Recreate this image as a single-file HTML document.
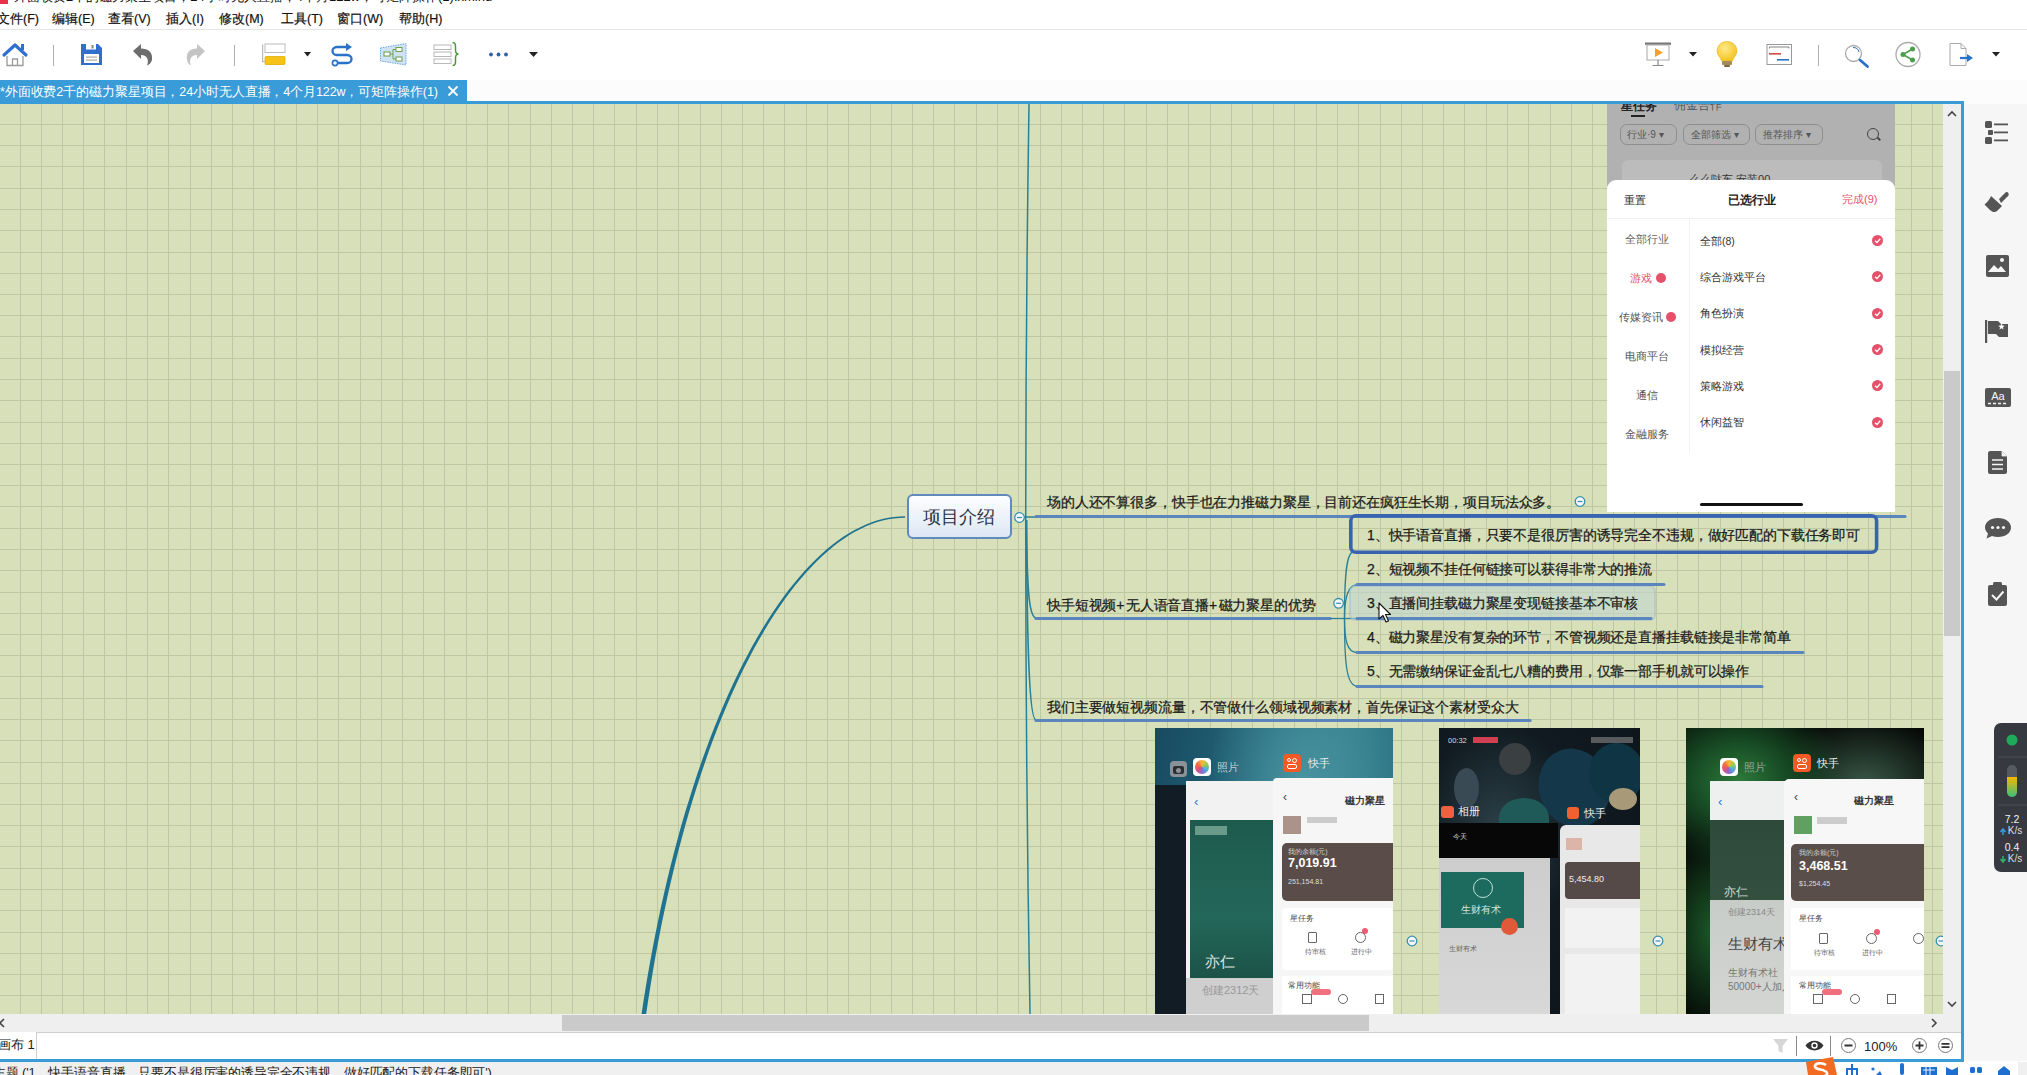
<!DOCTYPE html>
<html><head><meta charset="utf-8">
<style>
*{margin:0;padding:0;box-sizing:border-box}
html,body{width:2027px;height:1075px;overflow:hidden;background:#fff;font-family:"Liberation Sans",sans-serif;color:#222}
.a{position:absolute}
.nw{white-space:nowrap}
.menu span{position:absolute;top:12px;font-size:12.5px;line-height:15px;color:#111;white-space:nowrap;-webkit-text-stroke:0.2px #111}
.tp{position:absolute;font-size:14px;letter-spacing:-0.13px;line-height:17px;color:#1a1a1a;white-space:nowrap;-webkit-text-stroke:0.25px #1a1a1a}
.ph{position:absolute;overflow:hidden}
.ph *{position:absolute;white-space:nowrap}
.tp b{font-weight:normal;letter-spacing:1.3px}
</style></head><body>
<!-- title strip -->
<div class="a" style="left:0;top:0;width:8px;height:4px;background:#e8334a"></div>
<div class="a nw" style="left:14px;top:-10px;font-size:13px;line-height:14px;color:#111">外面收费2千的磁力聚星项目，24小时无人直播，4个月122w，可矩阵操作(1).xmind</div>
<!-- menu -->
<div class="menu">
<span style="left:-3px">文件(F)</span><span style="left:52px">编辑(E)</span><span style="left:108px">查看(V)</span><span style="left:166px">插入(I)</span><span style="left:219px">修改(M)</span><span style="left:281px">工具(T)</span><span style="left:337px">窗口(W)</span><span style="left:399px">帮助(H)</span>
</div>
<div class="a" style="left:0;top:29px;width:2027px;height:1px;background:#e6e6e6"></div>
<!-- toolbar -->
<svg class="a" style="left:0;top:30px" width="2027" height="50" viewBox="0 30 2027 50">
 <!-- home -->
 <path d="M4 55 L15 45 L26 55" stroke="#2f6fd0" stroke-width="3.2" fill="none" stroke-linejoin="round" stroke-linecap="round"/>
 <rect x="21" y="44" width="3" height="6" fill="#2f6fd0"/>
 <path d="M7 56 V65.5 H23 V56" stroke="#9a9a9a" stroke-width="1.3" fill="none"/>
 <path d="M12.5 65.5 V59 H17.5 V65.5" stroke="#9a9a9a" stroke-width="1.3" fill="none"/>
 <rect x="53" y="45" width="1" height="21" fill="#b0b0b0"/>
 <!-- save -->
 <path d="M81 44 H98 L102 48 V65 H81 Z" fill="#2f6fd0"/>
 <rect x="84" y="54" width="15" height="9" fill="#fff"/>
 <rect x="86" y="56.5" width="11" height="1.2" fill="#aaa"/>
 <rect x="86" y="59.5" width="11" height="1.2" fill="#aaa"/>
 <rect x="86" y="44" width="10" height="5.5" fill="#fff"/>
 <rect x="91.5" y="45" width="2" height="3.5" fill="#888"/>
 <!-- undo -->
 <path d="M133 51 L141 44 V48.5 C148 48.5 153 52 152 60 C151 63 149 65 147 65.5 C149 61 148 55 141 55 V59 Z" fill="#6d6d6d"/>
 <!-- redo -->
 <path d="M205 51 L197 44 V48.5 C190 48.5 186 52 187 60 C188 63 189 65 191 65.5 C189 61 190 55 197 55 V59 Z" fill="#c4c4c4"/>
 <rect x="234" y="45" width="1" height="21" fill="#b0b0b0"/>
 <!-- topic -->
 <rect x="262" y="44.5" width="1.2" height="18" fill="#bbb"/>
 <rect x="265" y="44" width="20" height="8.5" fill="#fff" stroke="#bbb" stroke-width="1"/>
 <rect x="265" y="56.5" width="20" height="8" rx="1" fill="#f7c21a" stroke="#e6ad00" stroke-width="0.8"/>
 <rect x="262" y="61" width="3" height="1" fill="#bbb"/>
 <path d="M304 52 H311 L307.5 56.5 Z" fill="#222"/>
 <!-- relationship -->
 <path d="M349 47 H337 C331 47 331 55 337 55 H347 C353 55 353 63 347 63 H338" stroke="#2a72c8" stroke-width="2.3" fill="none"/>
 <path d="M346 43 L352 47 L346 51 Z" fill="#2a72c8"/>
 <circle cx="335" cy="63" r="2.6" fill="#fff" stroke="#2a72c8" stroke-width="1.6"/>
 <!-- boundary/structure -->
 <path d="M380.5 48 L406 43.5 V65 L380.5 61 Z" fill="#cfe3f5" stroke="#6aa8da" stroke-width="1" stroke-dasharray="1.5 1"/>
 <rect x="384" y="52" width="6" height="4" fill="#fff" stroke="#6aa04a" stroke-width="1"/>
 <rect x="396" y="47.5" width="6" height="4" fill="#fff" stroke="#6aa04a" stroke-width="1"/>
 <rect x="396" y="57" width="6" height="4" fill="#fff" stroke="#6aa04a" stroke-width="1"/>
 <path d="M390 54 H393 M393 49.5 V59 M393 49.5 H396 M393 59 H396" stroke="#6aa04a" stroke-width="1" fill="none"/>
 <!-- summary -->
 <rect x="434" y="45" width="17" height="4.5" fill="#fff" stroke="#b8b8b8" stroke-width="1"/>
 <rect x="434" y="52" width="17" height="4.5" fill="#fff" stroke="#b8b8b8" stroke-width="1"/>
 <rect x="434" y="59" width="17" height="4.5" fill="#fff" stroke="#b8b8b8" stroke-width="1"/>
 <path d="M452.5 42.5 C456 42.5 455.5 45 455.5 50 C455.5 53 456.5 54 458.5 54 C456.5 54 455.5 55 455.5 58 C455.5 63 456 65.5 452.5 65.5" stroke="#4a9a3a" stroke-width="1.5" fill="none"/>
 <!-- more -->
 <circle cx="491" cy="54.5" r="1.9" fill="#2f5fa8"/><circle cx="498.5" cy="54.5" r="1.9" fill="#2f5fa8"/><circle cx="506" cy="54.5" r="1.9" fill="#2f5fa8"/>
 <path d="M529 52 H538 L533.5 57 Z" fill="#222"/>
 <!-- right side: presentation -->
 <rect x="1645" y="42.5" width="26" height="2.3" fill="#777"/>
 <rect x="1647" y="45" width="22" height="15" fill="#fff" stroke="#aaa" stroke-width="1"/>
 <path d="M1655 48 L1663 52.5 L1655 57 Z" fill="#f3a02a"/>
 <path d="M1658 60 V65.5 M1652.5 65.5 H1663.5" stroke="#888" stroke-width="1.2"/>
 <path d="M1689 52 H1697 L1693 56.5 Z" fill="#222"/>
 <!-- bulb -->
 <defs><radialGradient id="bg1" cx="0.4" cy="0.35" r="0.7"><stop offset="0" stop-color="#ffe98a"/><stop offset="1" stop-color="#f2c21c"/></radialGradient></defs>
 <path d="M1727 41.5 C1733 41.5 1737 46 1737 51 C1737 55 1733.5 57 1732.5 61 H1721.5 C1720.5 57 1717 55 1717 51 C1717 46 1721 41.5 1727 41.5 Z" fill="url(#bg1)" stroke="#e8b515" stroke-width="0.6"/>
 <rect x="1722" y="61" width="10" height="4" rx="1" fill="#a58a5a"/>
 <rect x="1724" y="65" width="6" height="2" rx="1" fill="#7a6540"/>
 <!-- gantt -->
 <rect x="1767" y="44.5" width="24.5" height="20" fill="#fff" stroke="#999" stroke-width="1"/>
 <path d="M1769.5 48.5 V47 H1789 V48.5" stroke="#666" stroke-width="0.8" fill="none"/>
 <rect x="1769" y="53" width="12" height="1.6" fill="#d44a4a"/>
 <rect x="1777" y="59" width="12" height="1.6" fill="#2a72c8"/>
 <rect x="1818" y="45" width="1" height="21" fill="#b0b0b0"/>
 <!-- search -->
 <circle cx="1853.5" cy="53.5" r="8" fill="#fff" stroke="#aaa" stroke-width="1.3"/>
 <path d="M1853 47.5 A6 6 0 0 1 1859 52" stroke="#2a72c8" stroke-width="1" fill="none"/>
 <path d="M1860 60 L1867.5 66.5" stroke="#2a72c8" stroke-width="2.8" stroke-linecap="round"/>
 <!-- share -->
 <circle cx="1908" cy="54.5" r="12" fill="#fff" stroke="#aaa" stroke-width="1.3"/>
 <circle cx="1912.5" cy="49" r="2.5" fill="#4aa04a"/><circle cx="1903" cy="54.5" r="2.5" fill="#4aa04a"/><circle cx="1912.5" cy="60" r="2.5" fill="#4aa04a"/>
 <path d="M1912.5 49 L1903 54.5 L1912.5 60" stroke="#4aa04a" stroke-width="1.6" fill="none"/>
 <!-- export -->
 <path d="M1950 43.5 H1961 L1966 48.5 V65.5 H1950 Z" fill="#fff" stroke="#aaa" stroke-width="1"/>
 <path d="M1961 43.5 V48.5 H1966" stroke="#aaa" stroke-width="1" fill="none"/>
 <path d="M1960 58 H1969" stroke="#2a72c8" stroke-width="2.2"/>
 <path d="M1967 54 L1973 58 L1967 62 Z" fill="#2a72c8"/>
 <path d="M1992 52 H2000 L1996 56.5 Z" fill="#222"/>
</svg>
<div class="a" style="left:0;top:80px;width:2027px;height:24px;background:#fcfcfc"></div>
<!-- tab bar -->
<div class="a" style="left:0;top:80px;width:467px;height:24px;background:#3a9bd9"></div>
<div class="a nw" style="left:0;top:84px;font-size:12.5px;letter-spacing:-0.1px;line-height:16px;color:#fff">*外面收费2千的磁力聚星项目，24小时无人直播，4个月122w，可矩阵操作(1)</div>
<svg class="a" style="left:447px;top:85px" width="12" height="12"><path d="M1.5 1.5 L10.5 10.5 M10.5 1.5 L1.5 10.5" stroke="#fff" stroke-width="1.8"/></svg>
<div class="a" style="left:0;top:101px;width:1964px;height:3px;background:#3a9bd9"></div>
<!-- canvas -->
<div class="a" style="left:0;top:104px;width:1943px;height:910px;overflow:hidden;background:#d7e0b9">
 <div class="a" id="cv" style="left:0;top:-104px;width:1943px;height:1014px">
  <svg class="a" style="left:0;top:0" width="1943" height="1014">
   <path d="M20.5 104V1014M41.5 104V1014M62.5 104V1014M83.5 104V1014M104.5 104V1014M126.5 104V1014M147.5 104V1014M168.5 104V1014M190.5 104V1014M211.5 104V1014M232.5 104V1014M253.5 104V1014M274.5 104V1014M296.5 104V1014M317.5 104V1014M338.5 104V1014M360.5 104V1014M381.5 104V1014M402.5 104V1014M423.5 104V1014M444.5 104V1014M466.5 104V1014M487.5 104V1014M508.5 104V1014M530.5 104V1014M551.5 104V1014M572.5 104V1014M593.5 104V1014M614.5 104V1014M636.5 104V1014M657.5 104V1014M678.5 104V1014M700.5 104V1014M721.5 104V1014M742.5 104V1014M763.5 104V1014M784.5 104V1014M806.5 104V1014M827.5 104V1014M848.5 104V1014M870.5 104V1014M891.5 104V1014M912.5 104V1014M933.5 104V1014M954.5 104V1014M976.5 104V1014M997.5 104V1014M1018.5 104V1014M1040.5 104V1014M1061.5 104V1014M1082.5 104V1014M1103.5 104V1014M1124.5 104V1014M1146.5 104V1014M1167.5 104V1014M1188.5 104V1014M1210.5 104V1014M1231.5 104V1014M1252.5 104V1014M1273.5 104V1014M1294.5 104V1014M1316.5 104V1014M1337.5 104V1014M1358.5 104V1014M1380.5 104V1014M1401.5 104V1014M1422.5 104V1014M1443.5 104V1014M1464.5 104V1014M1486.5 104V1014M1507.5 104V1014M1528.5 104V1014M1550.5 104V1014M1571.5 104V1014M1592.5 104V1014M1613.5 104V1014M1634.5 104V1014M1656.5 104V1014M1677.5 104V1014M1698.5 104V1014M1720.5 104V1014M1741.5 104V1014M1762.5 104V1014M1783.5 104V1014M1804.5 104V1014M1826.5 104V1014M1847.5 104V1014M1868.5 104V1014M1890.5 104V1014M1911.5 104V1014M1932.5 104V1014M0 124.5H1943M0 145.5H1943M0 166.5H1943M0 188.5H1943M0 209.5H1943M0 230.5H1943M0 252.5H1943M0 273.5H1943M0 294.5H1943M0 315.5H1943M0 336.5H1943M0 358.5H1943M0 379.5H1943M0 400.5H1943M0 422.5H1943M0 443.5H1943M0 464.5H1943M0 485.5H1943M0 506.5H1943M0 528.5H1943M0 549.5H1943M0 570.5H1943M0 592.5H1943M0 613.5H1943M0 634.5H1943M0 655.5H1943M0 676.5H1943M0 698.5H1943M0 719.5H1943M0 740.5H1943M0 762.5H1943M0 783.5H1943M0 804.5H1943M0 825.5H1943M0 846.5H1943M0 868.5H1943M0 889.5H1943M0 910.5H1943M0 932.5H1943M0 953.5H1943M0 974.5H1943M0 995.5H1943" stroke="#bdc8a2" stroke-width="1" fill="none"/>
   <!-- main big curve (tapered) -->
   <path d="M905.0 516.3 L899.3 516.5 L893.7 517.0 L888.0 517.8 L882.4 519.1 L876.7 520.6 L871.0 522.5 L865.4 524.8 L859.7 527.4 L854.1 530.3 L848.5 533.5 L842.9 537.1 L837.3 541.0 L831.7 545.3 L826.2 549.8 L820.7 554.7 L815.2 559.9 L809.7 565.4 L804.3 571.3 L798.9 577.4 L793.5 583.9 L788.2 590.6 L782.9 597.7 L777.7 605.1 L772.5 612.7 L767.3 620.7 L762.2 628.9 L757.2 637.5 L752.2 646.3 L747.3 655.4 L742.4 664.8 L737.6 674.5 L732.8 684.4 L728.1 694.7 L723.5 705.2 L719.0 716.0 L714.5 727.0 L710.1 738.3 L705.8 749.9 L701.5 761.8 L697.3 773.9 L693.3 786.2 L689.3 798.9 L685.3 811.7 L681.5 824.8 L677.8 838.2 L674.2 851.8 L670.6 865.7 L667.2 879.8 L663.9 894.1 L660.6 908.7 L657.5 923.5 L654.5 938.5 L651.6 953.8 L648.8 969.2 L646.1 985.0 L643.5 1000.9 L641.1 1017.0 L638.8 1033.4 L636.6 1050.0 L641.2 1050.6 L643.4 1034.0 L645.6 1017.7 L648.0 1001.6 L650.5 985.7 L653.1 970.0 L655.8 954.5 L658.7 939.3 L661.6 924.3 L664.7 909.5 L667.8 895.0 L671.1 880.7 L674.5 866.6 L677.9 852.8 L681.5 839.2 L685.1 825.9 L688.9 812.8 L692.7 799.9 L696.7 787.3 L700.7 775.0 L704.8 762.9 L708.9 751.1 L713.2 739.5 L717.5 728.2 L721.9 717.2 L726.4 706.4 L730.9 695.9 L735.6 685.7 L740.2 675.8 L745.0 666.1 L749.8 656.7 L754.6 647.6 L759.6 638.8 L764.5 630.3 L769.5 622.1 L774.6 614.1 L779.7 606.5 L784.9 599.1 L790.1 592.1 L795.3 585.3 L800.6 578.9 L805.9 572.8 L811.3 566.9 L816.6 561.4 L822.0 556.2 L827.5 551.4 L832.9 546.8 L838.4 542.6 L843.9 538.7 L849.4 535.1 L854.9 531.8 L860.5 528.9 L866.0 526.3 L871.6 524.0 L877.2 522.1 L882.7 520.6 L888.3 519.3 L893.9 518.4 L899.4 517.9 L905.0 517.7Z" fill="#1f7391"/>
   <!-- long spine -->
   <path d="M1029 104 Q1022 560 1030 1014" stroke="#2a8197" stroke-width="1.5" fill="none"/>
   <!-- branches from node -->
   <path d="M1024 517 H1036" stroke="#2a8197" stroke-width="1.5" fill="none"/>
   <path d="M1026.5 520 C1027 590 1029 617 1036 618" stroke="#2a8197" stroke-width="1.6" fill="none"/>
   <path d="M1026.5 520 C1027 660 1030 720 1036 720" stroke="#2a8197" stroke-width="1.6" fill="none"/>
   <!-- underlines level 1 -->
   <path d="M1036 516.5 H1905" stroke="#5a86bd" stroke-width="3.2" fill="none" stroke-linecap="round"/>
   <path d="M1036 618.5 H1330" stroke="#5a86bd" stroke-width="3.2" fill="none" stroke-linecap="round"/>
   <path d="M1330 618.5 H1358" stroke="#2a8197" stroke-width="1.3" fill="none"/>
   <path d="M1036 720.5 H1530" stroke="#5a86bd" stroke-width="3.2" fill="none" stroke-linecap="round"/>
   <!-- sub branches -->
   <path d="M1344.5 618 C1344.5 580 1346 553 1353 552" stroke="#2a8197" stroke-width="1.3" fill="none"/>
   <path d="M1344.5 618 C1344.5 600 1347 585 1357 585" stroke="#2a8197" stroke-width="1.3" fill="none"/>
   <path d="M1344.5 618 C1344.5 640 1347 652.5 1357 652.5" stroke="#2a8197" stroke-width="1.3" fill="none"/>
   <path d="M1344.5 618 C1344.5 660 1346 686 1357 686" stroke="#2a8197" stroke-width="1.3" fill="none"/>
   <!-- hover box sub3 -->
   <rect x="1350" y="586" width="305" height="34" rx="5" fill="#c3d6cf" fill-opacity="0.6" stroke="#9fbccf" stroke-opacity="0.5" stroke-width="2"/>
   <!-- sub underlines -->
   <path d="M1357 584.5 H1664" stroke="#5a86bd" stroke-width="3" fill="none" stroke-linecap="round"/>
   <path d="M1357 618.5 H1651" stroke="#5a86bd" stroke-width="3" fill="none" stroke-linecap="round"/>
   <path d="M1357 652.5 H1803" stroke="#5a86bd" stroke-width="3" fill="none" stroke-linecap="round"/>
   <path d="M1357 686.5 H1762" stroke="#5a86bd" stroke-width="3" fill="none" stroke-linecap="round"/>
   <!-- selected sub1 box -->
   <rect x="1350.8" y="515.7" width="525.8" height="36.6" rx="5" fill="none" stroke="#3763af" stroke-width="3.6"/>
   <!-- collapse circles -->
   <g fill="#f4f8fb" stroke="#3b8fae" stroke-width="1.3">
    <circle cx="1019.5" cy="517.5" r="4.8"/>
    <circle cx="1580" cy="501.5" r="4.8"/>
    <circle cx="1338.6" cy="603.3" r="4.8"/>
    <circle cx="1412" cy="941" r="4.8"/>
    <circle cx="1658" cy="941" r="4.8"/>
    <circle cx="1941" cy="941" r="4.8"/>
   </g>
   <g stroke="#3b8fae" stroke-width="1.2">
    <path d="M1017 517.5 H1022"/><path d="M1577.5 501.5 H1582.5"/><path d="M1336.1 603.3 H1341.1"/>
    <path d="M1409.5 941 H1414.5"/><path d="M1655.5 941 H1660.5"/><path d="M1938.5 941 H1943.5"/>
   </g>
  </svg>
  <!-- central node -->
  <div class="a" style="left:907px;top:493.5px;width:104.5px;height:45px;border:2px solid #5f8abd;border-radius:6px;background:linear-gradient(#fdfeff,#dde7f4)"></div>
  <div class="a nw" style="left:922.5px;top:506px;font-size:18px;line-height:22px;color:#2b3344">项目介绍</div>
  <!-- level1 topics -->
  <div class="tp" style="left:1047px;top:494px">场的人还不算很多，快手也在力推磁力聚星，目前还在疯狂生长期，项目玩法众多。</div>
  <div class="tp" style="left:1047px;top:597px">快手短视频<b>+</b>无人语音直播<b>+</b>磁力聚星的优势</div>
  <div class="tp" style="left:1047px;top:699px">我们主要做短视频流量，不管做什么领域视频素材，首先保证这个素材受众大</div>
  <!-- subs -->
  <div class="tp" style="left:1367px;top:527px">1、快手语音直播，只要不是很厉害的诱导完全不违规，做好匹配的下载任务即可</div>
  <div class="tp" style="left:1367px;top:561px">2、短视频不挂任何链接可以获得非常大的推流</div>
  <div class="tp" style="left:1367px;top:595px">3、直播间挂载磁力聚星变现链接基本不审核</div>
  <div class="tp" style="left:1367px;top:629px">4、磁力聚星没有复杂的环节，不管视频还是直播挂载链接是非常简单</div>
  <div class="tp" style="left:1367px;top:663px">5、无需缴纳保证金乱七八糟的费用，仅靠一部手机就可以操作</div>
  <!-- cursor -->
  <svg class="a" style="left:1378px;top:602px" width="14" height="22"><path d="M1 1 V17 L5 13.5 L8 20 L10.5 19 L7.5 12.5 H12.5 Z" fill="#fff" stroke="#111" stroke-width="1.1" stroke-linejoin="round"/></svg>
 </div>
</div>
<!-- images inside canvas clip: positioned in page coords, clipped by wrapper -->
<div class="a" style="left:0;top:104px;width:1943px;height:910px;overflow:hidden">
<div class="a" style="left:0;top:-104px;width:1943px;height:1014px">

<!-- top phone screenshot (filter sheet) -->
<div class="ph" style="left:1607px;top:90px;width:288px;height:422px;background:#b1b1b1;font-size:10px;color:#444">
 <div style="left:14px;top:8px;font-size:12px;font-weight:bold;color:#222">星任务</div>
 <div style="left:67px;top:8px;font-size:11.5px;color:#555">佣金合作</div>
 <div style="left:24px;top:25px;width:14px;height:2px;background:#222"></div>
 <div style="left:13px;top:34px;width:57px;height:21px;border:1px solid #8e8e8e;border-radius:7px"></div>
 <div style="left:76px;top:34px;width:67px;height:21px;border:1px solid #8e8e8e;border-radius:7px"></div>
 <div style="left:148px;top:34px;width:68px;height:21px;border:1px solid #8e8e8e;border-radius:7px"></div>
 <div style="left:20px;top:38px;font-size:10px;color:#555">行业·9 ▾</div>
 <div style="left:84px;top:38px;font-size:10px;color:#555">全部筛选 ▾</div>
 <div style="left:156px;top:38px;font-size:10px;color:#555">推荐排序 ▾</div>
 <div style="left:260px;top:38px;width:12px;height:12px;border:1.6px solid #444;border-radius:50%"></div><div style="left:270px;top:48px;width:4px;height:1.6px;background:#444;transform:rotate(45deg)"></div>
 <div style="left:15px;top:70px;width:260px;height:40px;background:#bcbcbc;border-radius:6px"></div>
 <div style="left:82px;top:82px;font-size:11px;color:#333">么么哒车 安装00</div>
 <div style="left:0;top:90px;width:288px;height:340px;background:#fff;border-radius:9px 9px 0 0"></div>
 <div style="left:17px;top:103px;font-size:11px;color:#333">重置</div>
 <div style="left:121px;top:102px;font-size:12px;font-weight:bold;color:#222">已选行业</div>
 <div style="left:235px;top:102px;font-size:11px;color:#e5506a">完成(9)</div>
 <div style="left:0;top:128px;width:288px;height:1px;background:#f0f0f0"></div>
 <div style="left:82px;top:128px;width:1px;height:235px;background:#f2f2f2"></div>
 <div style="left:18px;top:142px;font-size:11px;color:#666">全部行业</div>
 <div style="left:23px;top:181px;font-size:11px;color:#e5506a">游戏</div>
 <div style="left:49px;top:183px;width:10px;height:10px;border-radius:50%;background:#e5506a"></div>
 <div style="left:12px;top:220px;font-size:11px;color:#555">传媒资讯</div>
 <div style="left:59px;top:222px;width:10px;height:10px;border-radius:50%;background:#e5506a"></div>
 <div style="left:18px;top:259px;font-size:11px;color:#555">电商平台</div>
 <div style="left:29px;top:298px;font-size:11px;color:#555">通信</div>
 <div style="left:18px;top:337px;font-size:11px;color:#555">金融服务</div>
 <div style="left:93px;top:145px;font-size:10.5px;color:#333">全部(8)</div>
 <div style="left:93px;top:181px;font-size:10.5px;color:#333">综合游戏平台</div>
 <div style="left:93px;top:217px;font-size:10.5px;color:#333">角色扮演</div>
 <div style="left:93px;top:254px;font-size:10.5px;color:#333">模拟经营</div>
 <div style="left:93px;top:290px;font-size:10.5px;color:#333">策略游戏</div>
 <div style="left:93px;top:326px;font-size:10.5px;color:#333">休闲益智</div>
 <div style="left:265px;top:145px;width:11px;height:11px;border-radius:50%;background:#e5506a"></div>
 <div style="left:265px;top:181px;width:11px;height:11px;border-radius:50%;background:#e5506a"></div>
 <div style="left:265px;top:218px;width:11px;height:11px;border-radius:50%;background:#e5506a"></div>
 <div style="left:265px;top:254px;width:11px;height:11px;border-radius:50%;background:#e5506a"></div>
 <div style="left:265px;top:290px;width:11px;height:11px;border-radius:50%;background:#e5506a"></div>
 <div style="left:265px;top:327px;width:11px;height:11px;border-radius:50%;background:#e5506a"></div>
 <svg style="left:265px;top:145px" width="11" height="11"><path d="M3 5.8 L5 7.6 L8.2 3.8" stroke="#fff" stroke-width="1.4" fill="none"/></svg><svg style="left:265px;top:181px" width="11" height="11"><path d="M3 5.8 L5 7.6 L8.2 3.8" stroke="#fff" stroke-width="1.4" fill="none"/></svg><svg style="left:265px;top:218px" width="11" height="11"><path d="M3 5.8 L5 7.6 L8.2 3.8" stroke="#fff" stroke-width="1.4" fill="none"/></svg><svg style="left:265px;top:254px" width="11" height="11"><path d="M3 5.8 L5 7.6 L8.2 3.8" stroke="#fff" stroke-width="1.4" fill="none"/></svg><svg style="left:265px;top:290px" width="11" height="11"><path d="M3 5.8 L5 7.6 L8.2 3.8" stroke="#fff" stroke-width="1.4" fill="none"/></svg><svg style="left:265px;top:327px" width="11" height="11"><path d="M3 5.8 L5 7.6 L8.2 3.8" stroke="#fff" stroke-width="1.4" fill="none"/></svg>
 <div style="left:93px;top:413px;width:103px;height:3px;border-radius:2px;background:#111"></div>
</div>

<!-- image 1 -->
<div class="ph" style="left:1155px;top:728px;width:238px;height:290px;background:radial-gradient(ellipse 40% 50% at 62% 20%,#4a93a0 0%,rgba(60,130,145,0) 100%),linear-gradient(100deg,#184a60 0%,#24687c 40%,#35808e 65%,#2b6f80 100%)">
 <div style="left:0;top:57px;width:31px;height:240px;background:#121c24"></div>
 <div style="left:15px;top:33px;width:17px;height:16px;border-radius:4px;background:#8a9298"></div>
 <div style="left:18px;top:38px;width:11px;height:8px;border-radius:2px;background:#2a2f33"></div><div style="left:21px;top:39.5px;width:5px;height:5px;border-radius:50%;background:#8a9298"></div>
 <div style="left:38px;top:30px;width:18px;height:18px;border-radius:4px;background:#fff"></div><div style="left:40px;top:32px;width:14px;height:14px;border-radius:50%;background:conic-gradient(#f5b83d,#9ccc4a,#4ab0e0,#8a6ad0,#e0507a,#f07040,#f5b83d)"></div>
 <div style="left:62px;top:32px;font-size:11px;color:#c8d0d4">照片</div>
 <div style="left:31px;top:53px;width:100px;height:240px;background:#f2f2f2"></div>
 <div style="left:39px;top:66px;font-size:13px;color:#2a78d8">‹</div>
 <div style="left:35px;top:92px;width:86px;height:160px;background:linear-gradient(#1e5a4e,#23675a 60%,#1c5248)"></div>
 <div style="left:40px;top:98px;width:32px;height:9px;background:#6a9a8a"></div>
 <div style="left:50px;top:225px;font-size:15px;color:#d8e4e0">亦仁</div>
 <div style="left:31px;top:250px;width:90px;height:40px;background:#cfcfcf"></div>
 <div style="left:47px;top:255px;font-size:11px;color:#999">创建2312天</div>
 <div style="left:128px;top:26px;width:18px;height:18px;border-radius:4px;background:#f15a24"></div><div style="left:132px;top:30px;width:4px;height:4px;border:1.5px solid #fff;border-radius:50%"></div><div style="left:137px;top:30px;width:5px;height:5px;border:1.5px solid #fff;border-radius:50%"></div><div style="left:132px;top:36px;width:10px;height:5px;border:1.5px solid #fff;border-radius:2px"></div>
 <div style="left:153px;top:28px;font-size:11px;color:#e6eef0">快手</div>
 <div style="left:118px;top:50px;width:125px;height:240px;background:#f6f6f6;border-radius:4px 0 0 0"></div>
 <div style="left:128px;top:62px;font-size:12px;color:#444">‹</div>
 <div style="left:190px;top:67px;font-size:9.5px;color:#333;font-weight:bold">磁力聚星</div>
 <div style="left:128px;top:88px;width:18px;height:18px;background:#8a6a5a;opacity:.7"></div>
 <div style="left:152px;top:89px;width:30px;height:6px;background:#ccc"></div>
 <div style="left:127px;top:115px;width:120px;height:58px;border-radius:5px 0 0 5px;background:#5a4d49"></div>
 <div style="left:133px;top:119px;font-size:7px;color:#ccc">我的余额(元)</div>
 <div style="left:133px;top:128px;font-size:12.5px;color:#fff;font-weight:bold">7,019.91</div>
 <div style="left:133px;top:150px;font-size:7px;color:#ddd">251,154.81</div>
 <div style="left:127px;top:180px;width:111px;height:62px;border-radius:4px;background:#fff"></div>
 <div style="left:135px;top:186px;font-size:7.5px;color:#444">星任务</div>
 <div style="left:153px;top:204px;width:9px;height:11px;border:1.2px solid #666;border-radius:1px"></div>
 <div style="left:200px;top:204px;width:11px;height:11px;border:1.2px solid #666;border-radius:50%"></div>
 <div style="left:207px;top:200px;width:6px;height:6px;border-radius:50%;background:#f05a70"></div>
 <div style="left:150px;top:220px;font-size:6.5px;color:#666">待审核</div>
 <div style="left:196px;top:220px;font-size:6.5px;color:#666">进行中</div>
 <div style="left:127px;top:248px;width:111px;height:50px;background:#fff"></div>
 <div style="left:133px;top:253px;font-size:7.5px;color:#444">常用功能</div>
 <div style="left:147px;top:266px;width:10px;height:10px;border:1.2px solid #666"></div>
 <div style="left:183px;top:266px;width:10px;height:10px;border:1.2px solid #666;border-radius:50%"></div>
 <div style="left:220px;top:266px;width:9px;height:10px;border:1.2px solid #666"></div>
 <div style="left:156px;top:261px;width:20px;height:6px;border-radius:3px;background:#f07080"></div>
</div>

<!-- image 2 -->
<div class="ph" style="left:1439px;top:728px;width:201px;height:290px;background:radial-gradient(ellipse at 30% 35%,#2c4048 0%,#101a20 40%,#0c141a 100%)">
 <div style="left:100px;top:20px;width:70px;height:80px;border-radius:50%;background:#14384a;transform:rotate(-20deg)"></div>
 <div style="left:150px;top:15px;width:55px;height:60px;border-radius:50%;background:#0f3444"></div>
 <div style="left:60px;top:70px;width:50px;height:40px;border-radius:50% 50% 0 0;background:#1f5a58"></div>
 <div style="left:15px;top:40px;width:25px;height:40px;border-radius:50%;background:#3a4a55"></div>
 <div style="left:60px;top:15px;width:32px;height:32px;border-radius:50%;background:#3a3f42"></div>
 <div style="left:170px;top:60px;width:28px;height:22px;border-radius:50%;background:#a89a78"></div>
 <div style="left:9px;top:8px;font-size:7.5px;color:#ddd">00:32</div>
 <div style="left:34px;top:9px;width:25px;height:6px;background:#d04050"></div>
 <div style="left:152px;top:9px;width:42px;height:6px;background:#888;opacity:.6"></div>
 <div style="left:2px;top:78px;width:13px;height:12px;border-radius:3px;background:#f06040"></div>
 <div style="left:19px;top:77px;font-size:10.5px;color:#eee">相册</div>
 <div style="left:128px;top:79px;width:12px;height:12px;border-radius:3px;background:#f06030"></div>
 <div style="left:145px;top:79px;font-size:10.5px;color:#eee">快手</div>
 <div style="left:0;top:95px;width:119px;height:35px;background:#070707"></div>
 <div style="left:14px;top:104px;font-size:7px;color:#ccc">今天</div>
 <div style="left:0;top:130px;width:111px;height:160px;background:linear-gradient(#cdcdcd,#d8d8d8)"></div>
 <div style="left:2px;top:144px;width:83px;height:56px;background:#1d6a5e"></div>
 <div style="left:34px;top:150px;width:20px;height:20px;border:1.5px solid #bfe0d8;border-radius:50%"></div>
 <div style="left:22px;top:176px;font-size:9.5px;color:#cfe8e0">生财有术</div>
 <div style="left:62px;top:190px;width:17px;height:17px;border-radius:50%;background:#e05a3a"></div>
 <div style="left:10px;top:216px;font-size:7px;color:#666">生财有术</div>
 <div style="left:121px;top:97px;width:85px;height:200px;background:#e8e8e8;border-radius:6px 0 0 0"></div>
 <div style="left:127px;top:110px;width:16px;height:12px;background:#d8a898;opacity:.8"></div>
 <div style="left:126px;top:134px;width:90px;height:37px;border-radius:4px 0 0 4px;background:#554a47"></div>
 <div style="left:130px;top:146px;font-size:9px;color:#eee">5,454.80</div>
 <div style="left:126px;top:180px;width:80px;height:40px;background:#f2f2f2"></div>
 <div style="left:126px;top:226px;width:80px;height:60px;background:#f2f2f2"></div>
</div>

<!-- image 3 -->
<div class="ph" style="left:1686px;top:728px;width:238px;height:290px;background:radial-gradient(ellipse 45% 30% at 22% 18%,#2c7a3a 0%,#174a24 45%,rgba(5,8,5,0) 100%),radial-gradient(ellipse 25% 35% at 12% 70%,#1c5a2a 0%,rgba(5,8,5,0) 100%),radial-gradient(ellipse 40% 25% at 75% 20%,#3a5a48 0%,rgba(5,8,5,0) 100%),#040604">
  <div style="left:34px;top:30px;width:18px;height:18px;border-radius:4px;background:#fff"></div><div style="left:36px;top:32px;width:14px;height:14px;border-radius:50%;background:conic-gradient(#f5b83d,#9ccc4a,#4ab0e0,#8a6ad0,#e0507a,#f07040,#f5b83d)"></div>
 <div style="left:58px;top:32px;font-size:11px;color:#9aa89c">照片</div>
 <div style="left:107px;top:26px;width:18px;height:18px;border-radius:4px;background:#f15a24"></div><div style="left:111px;top:30px;width:4px;height:4px;border:1.5px solid #fff;border-radius:50%"></div><div style="left:116px;top:30px;width:5px;height:5px;border:1.5px solid #fff;border-radius:50%"></div><div style="left:111px;top:36px;width:10px;height:5px;border:1.5px solid #fff;border-radius:2px"></div>
 <div style="left:131px;top:28px;font-size:11px;color:#eee">快手</div>
 <div style="left:24px;top:53px;width:80px;height:40px;background:#eef0f0"></div>
 <div style="left:32px;top:66px;font-size:13px;color:#2a78d8">‹</div>
 <div style="left:24px;top:92px;width:80px;height:80px;background:linear-gradient(#2d4a3a,#33503f)"></div>
 <div style="left:38px;top:156px;font-size:12px;color:#cfd8cf">亦仁</div>
 <div style="left:24px;top:172px;width:80px;height:120px;background:linear-gradient(#c8ccc8,#d4d6d4)"></div>
 <div style="left:42px;top:178px;font-size:9px;color:#888">创建2314天</div>
 <div style="left:42px;top:207px;font-size:15px;color:#444">生财有术</div>
 <div style="left:42px;top:238px;font-size:10px;color:#777">生财有术社</div>
 <div style="left:42px;top:252px;font-size:10px;color:#777">50000+人加入</div>
 <div style="left:98px;top:51px;width:145px;height:240px;background:#f7f7f7;border-radius:5px 0 0 0"></div>
 <div style="left:108px;top:62px;font-size:12px;color:#444">‹</div>
 <div style="left:168px;top:67px;font-size:9.5px;color:#333;font-weight:bold">磁力聚星</div>
 <div style="left:108px;top:88px;width:18px;height:18px;background:#3a8a3a;opacity:.8"></div>
 <div style="left:131px;top:89px;width:30px;height:7px;background:#ccc"></div>
 <div style="left:105px;top:116px;width:140px;height:57px;border-radius:5px 0 0 5px;background:#5a4e4b"></div>
 <div style="left:113px;top:120px;font-size:7px;color:#ccc">我的余额(元)</div>
 <div style="left:113px;top:131px;font-size:12.5px;color:#fff;font-weight:bold">3,468.51</div>
 <div style="left:113px;top:152px;font-size:7px;color:#ddd">$1,254.45</div>
 <div style="left:105px;top:180px;width:133px;height:62px;background:#fff"></div>
 <div style="left:113px;top:186px;font-size:7.5px;color:#444">星任务</div>
 <div style="left:133px;top:205px;width:9px;height:11px;border:1.2px solid #666;border-radius:1px"></div>
 <div style="left:180px;top:205px;width:11px;height:11px;border:1.2px solid #666;border-radius:50%"></div>
 <div style="left:227px;top:205px;width:11px;height:11px;border:1.2px solid #666;border-radius:50%"></div>
 <div style="left:188px;top:201px;width:6px;height:6px;border-radius:50%;background:#f05a70"></div>
 <div style="left:128px;top:221px;font-size:6.5px;color:#666">待审核</div>
 <div style="left:176px;top:221px;font-size:6.5px;color:#666">进行中</div>
 <div style="left:105px;top:248px;width:133px;height:50px;background:#fff"></div>
 <div style="left:113px;top:253px;font-size:7.5px;color:#444">常用功能</div>
 <div style="left:127px;top:266px;width:10px;height:10px;border:1.2px solid #666"></div>
 <div style="left:164px;top:266px;width:10px;height:10px;border:1.2px solid #666;border-radius:50%"></div>
 <div style="left:201px;top:266px;width:9px;height:10px;border:1.2px solid #666"></div>
 <div style="left:136px;top:261px;width:20px;height:6px;border-radius:3px;background:#f07080"></div>
</div>

</div></div>
<!-- v scrollbar -->
<div class="a" style="left:1943px;top:104px;width:18px;height:910px;background:#efefef"></div>
<div class="a" style="left:1944px;top:371px;width:16px;height:265px;background:#cacaca"></div>
<svg class="a" style="left:1946px;top:108px" width="12" height="12"><path d="M2 8 L6 4 L10 8" stroke="#444" stroke-width="1.6" fill="none"/></svg>
<svg class="a" style="left:1946px;top:998px" width="12" height="12"><path d="M2 4 L6 8 L10 4" stroke="#444" stroke-width="1.6" fill="none"/></svg>
<!-- h scrollbar -->
<div class="a" style="left:0;top:1014px;width:1961px;height:18px;background:#efefef"></div>
<div class="a" style="left:562px;top:1015px;width:807px;height:16px;background:#cacaca"></div>
<svg class="a" style="left:-4px;top:1017px" width="12" height="12"><path d="M8 2 L4 6 L8 10" stroke="#444" stroke-width="1.6" fill="none"/></svg>
<svg class="a" style="left:1928px;top:1017px" width="12" height="12"><path d="M4 2 L8 6 L4 10" stroke="#444" stroke-width="1.6" fill="none"/></svg>
<!-- blue right border -->
<div class="a" style="left:1961px;top:101px;width:3px;height:961px;background:#3a9bd9"></div>
<!-- right panel -->
<div class="a" style="left:1964px;top:104px;width:63px;height:957px;background:#f6f6f6"></div>
<svg class="a" style="left:1964px;top:104px" width="63" height="520" viewBox="1964 104 63 520">
 <g fill="#555">
  <!-- outline -->
  <rect x="1985" y="121" width="7" height="7" rx="1.5"/><rect x="1985" y="137" width="7" height="7" rx="1.5"/><rect x="1988" y="130" width="5" height="5" rx="1"/>
  <rect x="1994" y="123.5" width="14" height="1.8"/><rect x="1994" y="131.5" width="14" height="1.8"/><rect x="1994" y="139.5" width="14" height="1.8"/>
  <!-- brush -->
  <path d="M1999 199 L2005 193 C2006 191.5 2008 192 2008.5 193.5 C2009 195 2008.5 196 2007 197 L2001 203 Z"/>
  <path d="M1991 196 L2002 206 L1997 211 C1995 213 1992 212 1990 210 L1984.5 204.5 C1986 203 1989 201 1991 196 Z"/>
  <!-- image -->
  <rect x="1986" y="255" width="23" height="22" rx="2"/>
  <!-- flag -->
  <rect x="1985" y="320" width="2.2" height="23"/>
  <path d="M1988 321 H1998 L2001 324 H2008 V337 H1999 L1996 334 H1988 Z"/>
  <!-- Aa -->
  <rect x="1985" y="388" width="26" height="19" rx="2"/>
  <!-- doc -->
  <path d="M1988 453 C1988 452 1989 451 1990 451 H2002 L2007 456 V472 C2007 473 2006 474 2005 474 H1990 C1989 474 1988 473 1988 472 Z"/>
  <!-- comment -->
  <path d="M1998 518 C2005.5 518 2011 522 2011 527.5 C2011 533 2005.5 537 1998 537 C1996 537 1994 536.5 1992 536 L1986.5 538.5 L1988 533.5 C1986 531.5 1985 529.5 1985 527.5 C1985 522 1990.5 518 1998 518 Z"/>
  <!-- clipboard -->
  <rect x="1988" y="585" width="19" height="21" rx="2"/>
  <rect x="1993" y="582" width="9" height="5" rx="1.5"/>
 </g>
 <path d="M1988 272 L1994 265 L1998 269 L2001 266 L2006 272 Z" fill="#f6f6f6"/>
 <circle cx="2002" cy="260" r="2" fill="#f6f6f6"/>
 <path d="M2001.5 323.5 l1 2 2.2 .2 -1.7 1.5 .5 2.2 -2 -1.2 -2 1.2 .5 -2.2 -1.7 -1.5 2.2 -.2z" fill="#f6f6f6"/>
 <text x="1998" y="400" font-size="11" fill="#f6f6f6" text-anchor="middle" font-family="Liberation Sans">Aa</text>
 <path d="M1988 403.5 H2008" stroke="#f6f6f6" stroke-width="1.3" stroke-dasharray="3 2"/>
 <path d="M2002 451 V456 H2007" fill="#f6f6f6" stroke="#f6f6f6" stroke-width="0.8"/>
 <path d="M1992 460 H2003 M1992 464.5 H2003 M1992 469 H2003" stroke="#f6f6f6" stroke-width="1.4"/>
 <circle cx="1992.5" cy="527.5" r="1.6" fill="#f6f6f6"/><circle cx="1998" cy="527.5" r="1.6" fill="#f6f6f6"/><circle cx="2003.5" cy="527.5" r="1.6" fill="#f6f6f6"/>
 <path d="M1992 595 L1996.5 599.5 L2003.5 591.5" stroke="#f6f6f6" stroke-width="2" fill="none"/>
</svg>
<!-- network widget -->
<div class="a" style="left:1994px;top:723px;width:40px;height:149px;border-radius:7px;background:#363a40"></div>
<svg class="a" style="left:1994px;top:723px" width="33" height="149" viewBox="1994 723 33 149">
 <defs><linearGradient id="gy" x1="0" y1="0" x2="0" y2="1"><stop offset="0" stop-color="#f5b800"/><stop offset="1" stop-color="#3cc07a"/></linearGradient></defs>
 <circle cx="2012" cy="740" r="5.5" fill="#1faa5a"/>
 <path d="M1998 757 H2027 M1998 805 H2027" stroke="#4a4e55" stroke-width="1"/>
 <rect x="2007" y="765" width="10" height="32" rx="5" fill="#555a61"/>
 <path d="M2007 777 H2017 V792 A5 5 0 0 1 2007 792 Z" fill="url(#gy)"/>
 <text x="2012" y="823" font-size="10.5" fill="#f0f0f0" text-anchor="middle" font-family="Liberation Sans">7.2</text>
 <text x="2015" y="834" font-size="10" fill="#ddd" text-anchor="middle" font-family="Liberation Sans">K/s</text>
 <path d="M2003 835 V830 M2000.5 832 L2003 829 L2005.5 832" stroke="#3a9be0" stroke-width="1.5" fill="none"/>
 <text x="2012" y="851" font-size="10.5" fill="#f0f0f0" text-anchor="middle" font-family="Liberation Sans">0.4</text>
 <text x="2015" y="862" font-size="10" fill="#ddd" text-anchor="middle" font-family="Liberation Sans">K/s</text>
 <path d="M2003 856 V861 M2000.5 859 L2003 862 L2005.5 859" stroke="#2fb36a" stroke-width="1.5" fill="none"/>
</svg>
<!-- status bar -->
<div class="a" style="left:0;top:1032px;width:1961px;height:1px;background:#cfcfcf"></div>
<div class="a" style="left:0;top:1033px;width:1961px;height:26px;background:#fff"></div>
<div class="a" style="left:0;top:1032px;width:37px;height:27px;background:#fff;border-right:1px solid #cfcfcf"></div>
<div class="a nw" style="left:-2px;top:1037px;font-size:13px;line-height:16px;color:#222">画布 1</div>
<svg class="a" style="left:1760px;top:1033px" width="201" height="26" viewBox="1760 1033 201 26">
 <path d="M1773 1039 H1788 L1782.5 1046 V1053 L1778.5 1051 V1046 Z" fill="#d6d6d6"/>
 <path d="M1796.5 1036 V1056 M1830.5 1036 V1056" stroke="#8a8a8a" stroke-width="1"/>
 <path d="M1805.5 1045.5 C1809.5 1039 1819.5 1039 1823.5 1045.5 C1819.5 1052 1809.5 1052 1805.5 1045.5 Z" fill="#333"/>
 <circle cx="1814.5" cy="1045.5" r="3.2" fill="#fff"/><circle cx="1814.5" cy="1045.5" r="1.8" fill="#333"/>
 <g stroke="#777" stroke-width="1" fill="#fff"><circle cx="1848.5" cy="1045.5" r="7"/><circle cx="1919.5" cy="1045.5" r="7"/><circle cx="1945.5" cy="1045.5" r="7"/></g>
 <path d="M1844.5 1045.5 H1852.5 M1915.5 1045.5 H1923.5 M1919.5 1041.5 V1049.5 M1941.5 1043.8 H1949.5 M1941.5 1047.2 H1949.5" stroke="#333" stroke-width="1.8"/>
 <text x="1864" y="1050.5" font-size="13" fill="#222" font-family="Liberation Sans">100%</text>
</svg>
<div class="a" style="left:0;top:1059px;width:1964px;height:3px;background:#3a9bd9"></div>
<div class="a" style="left:0;top:1062px;width:2027px;height:13px;background:#f0f0f0;overflow:hidden">
 <div class="a nw" style="left:-7px;top:3px;font-size:12.8px;letter-spacing:-0.15px;line-height:16px;color:#222">主题 ('1、快手语音直播，只要不是很厉害的诱导完全不违规，做好匹配的下载任务即可')</div>
</div>
<!-- taskbar ime -->
<div class="a" style="left:1830px;top:1062px;width:188px;height:13px;background:#fff"></div>
<svg class="a" style="left:1800px;top:1055px" width="227" height="20" viewBox="1800 1055 227 20">
 <path d="M1806 1062 L1833 1057 L1837 1075 L1808 1075 Z" fill="#f26b21"/>
 <path d="M1826 1065 C1822 1062 1814 1063 1815 1067 C1816 1070 1826 1069 1827 1073 C1827.5 1075 1826 1076 1824 1076" stroke="#fff" stroke-width="2.6" fill="none"/>
 <g fill="#1e6fd0">
  <path d="M1846 1068 H1858 V1075 H1846 Z M1848 1070 V1075 H1856 V1070 Z M1851 1064 H1853 V1075 H1851 Z"/>
  <circle cx="1873" cy="1069" r="1.6"/><path d="M1876 1075 L1880 1071 L1882 1075 Z"/>
  <rect x="1900" y="1063" width="4" height="12" rx="2"/>
  <path d="M1921 1067 H1937 V1075 H1921 Z" />
  <path d="M1946 1067 L1952 1070 L1958 1067 V1075 H1946 Z"/>
  <rect x="1970" y="1067" width="5" height="6" rx="1.5"/><rect x="1977" y="1067" width="5" height="6" rx="1.5"/>
  <path d="M2004 1066 L2010 1071 V1075 H1998 V1071 Z"/>
 </g>
 <path d="M1923 1070 H1935 M1926 1067 V1075 M1930 1067 V1075" stroke="#fff" stroke-width="0.9"/>
</svg>
</body></html>
